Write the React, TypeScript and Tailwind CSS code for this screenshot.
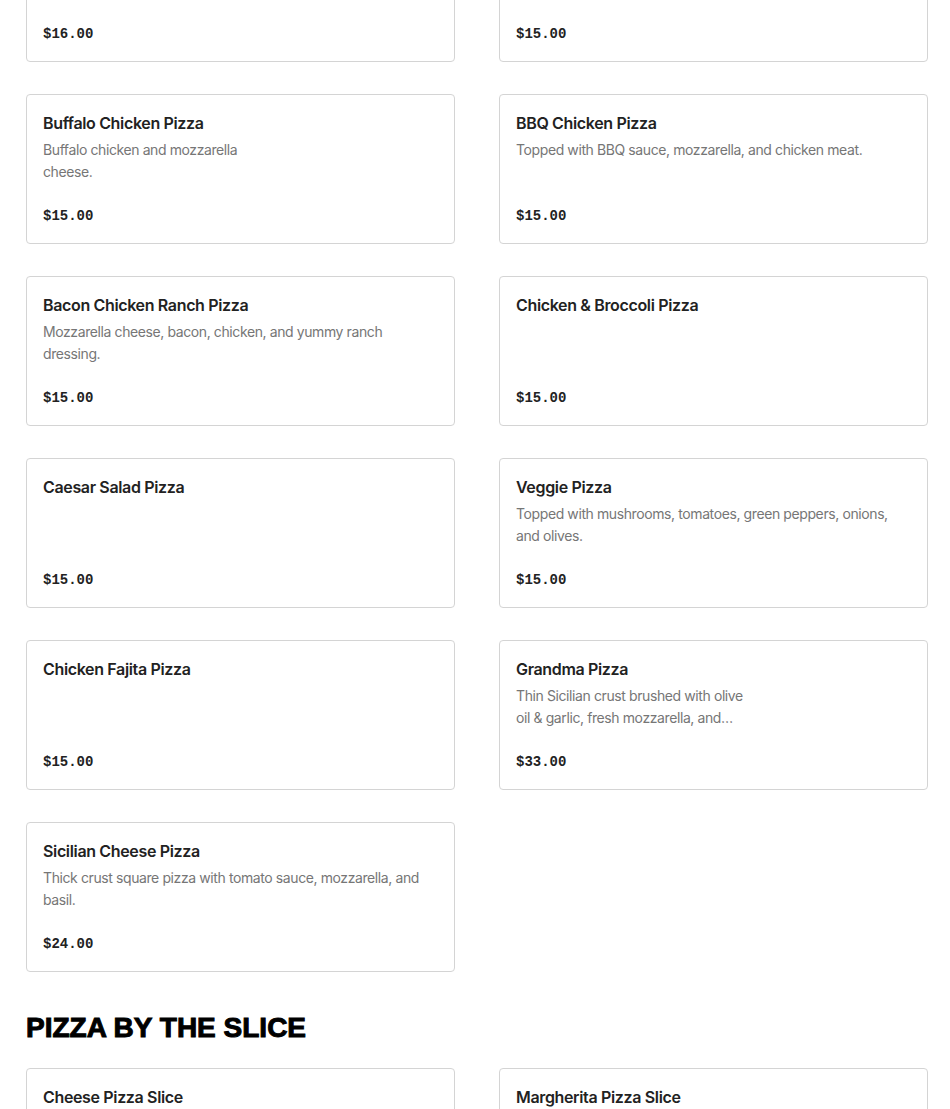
type Item = { name: string; desc?: string; price: string; narrow?: boolean };

const rows: Item[] = [
  { name: "Pepperoni Pizza", price: "$16.00" },
  { name: "Cheese Pizza", price: "$15.00" },
  { name: "Buffalo Chicken Pizza", desc: "Buffalo chicken and mozzarella cheese.", price: "$15.00", narrow: true },
  { name: "BBQ Chicken Pizza", desc: "Topped with BBQ sauce, mozzarella, and chicken meat.", price: "$15.00" },
  { name: "Bacon Chicken Ranch Pizza", desc: "Mozzarella cheese, bacon, chicken, and yummy ranch dressing.", price: "$15.00" },
  { name: "Chicken & Broccoli Pizza", price: "$15.00" },
  { name: "Caesar Salad Pizza", price: "$15.00" },
  { name: "Veggie Pizza", desc: "Topped with mushrooms, tomatoes, green peppers, onions, and olives.", price: "$15.00" },
  { name: "Chicken Fajita Pizza", price: "$15.00" },
  {
    name: "Grandma Pizza",
    desc: "Thin Sicilian crust brushed with olive oil & garlic, fresh mozzarella, and plum tomato sauce.",
    price: "$33.00",
    narrow: true,
  },
  { name: "Sicilian Cheese Pizza", desc: "Thick crust square pizza with tomato sauce, mozzarella, and basil.", price: "$24.00" },
];

const slices: Item[] = [
  { name: "Cheese Pizza Slice", price: "$3.50" },
  { name: "Margherita Pizza Slice", price: "$4.00" },
];

function Card({ item }: { item: Item }) {
  return (
    <div className="rounded-[4px] border border-[#d4d4d4] bg-white p-4">
      <div className="pt-px text-[16px] leading-[22px] font-semibold tracking-[-0.35px] text-[#222]">{item.name}</div>
      <div className={`mt-[5px] h-[44px] ${item.narrow ? "max-w-[232px]" : ""}`}>
        {item.desc && (
          <p className="line-clamp-2 text-[14px] leading-[22px] tracking-[-0.4px] text-[#767676]">{item.desc}</p>
        )}
      </div>
      <div
        className="mt-[22px] pt-px text-[14px] leading-[21px] font-bold text-[#222]"
        style={{ fontFamily: '"Liberation Mono", monospace' }}
      >
        {item.price}
      </div>
    </div>
  );
}

export default function App() {
  return (
    <div className="h-[1109px] overflow-hidden bg-white" style={{ fontFamily: "Inter, sans-serif" }}>
      <div className="-mt-[88px] pl-[26px] pr-[22px]">
        <div className="grid grid-cols-2 gap-x-[44px] gap-y-[32px]">
          {rows.map((it) => (
            <Card key={it.name} item={it} />
          ))}
        </div>

        <h2
          className="mt-[38px] mb-[22px] text-[28px] leading-[36px] font-bold text-black [-webkit-text-stroke:1px_black]"
          style={{ fontFamily: '"Liberation Sans", Arial, sans-serif' }}
        >
          PIZZA BY THE SLICE
        </h2>

        <div className="grid grid-cols-2 gap-x-[44px] gap-y-[32px]">
          {slices.map((it) => (
            <Card key={it.name} item={it} />
          ))}
        </div>
      </div>
    </div>
  );
}
